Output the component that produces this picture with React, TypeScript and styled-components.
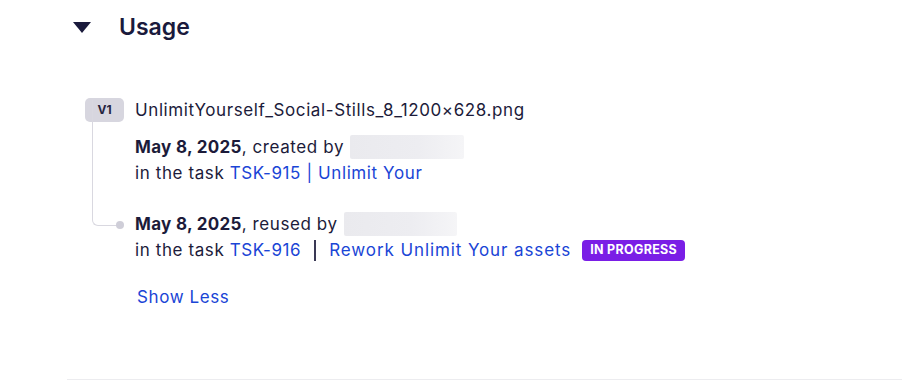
import React from "react";
import styled, { createGlobalStyle } from "styled-components";

const Global = createGlobalStyle`
  html, body { margin: 0; padding: 0; background: #ffffff; }
  body { font-family: Inter, "Noto Sans", sans-serif; color: #1c1b3a; }
`;

const Page = styled.div`
  width: 902px;
  height: 380px;
  box-sizing: border-box;
  padding-left: 67px;
  display: flex;
  flex-direction: column;
`;

const Section = styled.section`
  flex: 1;
  display: flex;
  flex-direction: column;
  border-bottom: 1px solid #ececef;
`;

const Header = styled.div`
  display: flex;
  align-items: center;
  gap: 28px;
  padding: 11px 0 0 6px;
  height: 32px;
`;

const Caret = styled.svg`
  width: 18px;
  height: 11px;
  display: block;
`;

const Title = styled.h2`
  margin: 0;
  font-size: 23px;
  font-weight: 600;
  line-height: 32px;
  color: #1a1a3c;
`;

const Body = styled.div`
  padding: 54px 0 0 18px;
  display: flex;
  flex-direction: column;
  font-size: 17px;
  letter-spacing: 0.6px;
`;

const VersionRow = styled.div`
  display: flex;
  align-items: center;
  gap: 11px;
  height: 25px;
`;

const VersionBadge = styled.span`
  width: 39px;
  height: 24px;
  border-radius: 5px;
  background: #d7d6df;
  color: #26253f;
  font-size: 12px;
  font-weight: 700;
  letter-spacing: 0;
  display: flex;
  align-items: center;
  justify-content: center;
`;

const FileName = styled.span`
  line-height: 24px;
  color: #1c1b3a;
`;

const Events = styled.div`
  display: flex;
  flex-direction: column;
  padding-left: 50px;
  gap: 25px;
  margin-top: 12px;
`;

const Event = styled.div<{ $connector?: boolean }>`
  position: relative;
  line-height: 26px;
  color: #1c1b3a;

  ${(p) =>
    p.$connector &&
    `
    &::before {
      content: "";
      position: absolute;
      left: -43px;
      top: -111px;
      width: 25px;
      height: 125px;
      border-left: 1px solid #d9d8e0;
      border-bottom: 1px solid #d9d8e0;
      border-bottom-left-radius: 6px;
    }
    &::after {
      content: "";
      position: absolute;
      left: -19px;
      top: 10px;
      width: 8px;
      height: 8px;
      border-radius: 50%;
      background: #cfced8;
    }
  `}
`;

const Line = styled.div`
  display: flex;
  align-items: center;
  white-space: pre;
  height: 26px;
`;

const Strong = styled.strong`
  font-weight: 700;
  letter-spacing: 0.3px;
`;

const Redacted = styled.span<{ $w: number }>`
  display: inline-block;
  width: ${(p) => p.$w}px;
  height: 24px;
  margin-left: 6px;
  border-radius: 2px;
  background: linear-gradient(90deg, #eaeaee 0%, #ededf1 60%, #f5f5f7 100%);
`;

const Link = styled.a<{ $wide?: boolean }>`
  color: #1a45d6;
  text-decoration: none;
  cursor: pointer;
  letter-spacing: ${(p) => (p.$wide ? "0.9px" : "0.6px")};
`;

const Divider = styled.span`
  display: inline-block;
  width: 2px;
  height: 21px;
  margin: 0 13px 0 13px;
  background: #3a3955;
`;

const Status = styled.span`
  margin-left: 11px;
  height: 21px;
  padding: 0 8px;
  border-radius: 4px;
  background: #7a1ee6;
  color: #ffffff;
  font-size: 12.5px;
  font-weight: 700;
  letter-spacing: 0.3px;
  display: inline-flex;
  align-items: center;
`;

const ShowLess = styled.a`
  margin: 22px 0 0 52px;
  line-height: 24px;
  color: #1a45d6;
  cursor: pointer;
`;

export default function App() {
  return (
    <>
      <Global />
      <Page>
        <Section>
          <Header>
            <Caret viewBox="0 0 18 11">
              <path d="M0 0 H18 L9 11 Z" fill="#1a1a3c" />
            </Caret>
            <Title>Usage</Title>
          </Header>
          <Body>
            <VersionRow>
              <VersionBadge>V1</VersionBadge>
              <FileName>UnlimitYourself_Social-Stills_8_1200×628.png</FileName>
            </VersionRow>
            <Events>
              <Event>
                <Line>
                  <Strong>May 8, 2025</Strong>, created by
                  <Redacted $w={114} />
                </Line>
                <Line>
                  in the task <Link>TSK-915 | Unlimit Your</Link>
                </Line>
              </Event>
              <Event $connector>
                <Line>
                  <Strong>May 8, 2025</Strong>, reused by
                  <Redacted $w={113} />
                </Line>
                <Line>
                  in the task <Link>TSK-916</Link>
                  <Divider aria-label="|" />
                  <Link $wide>Rework Unlimit Your assets</Link>
                  <Status>IN PROGRESS</Status>
                </Line>
              </Event>
            </Events>
            <ShowLess>Show Less</ShowLess>
          </Body>
        </Section>
      </Page>
    </>
  );
}
